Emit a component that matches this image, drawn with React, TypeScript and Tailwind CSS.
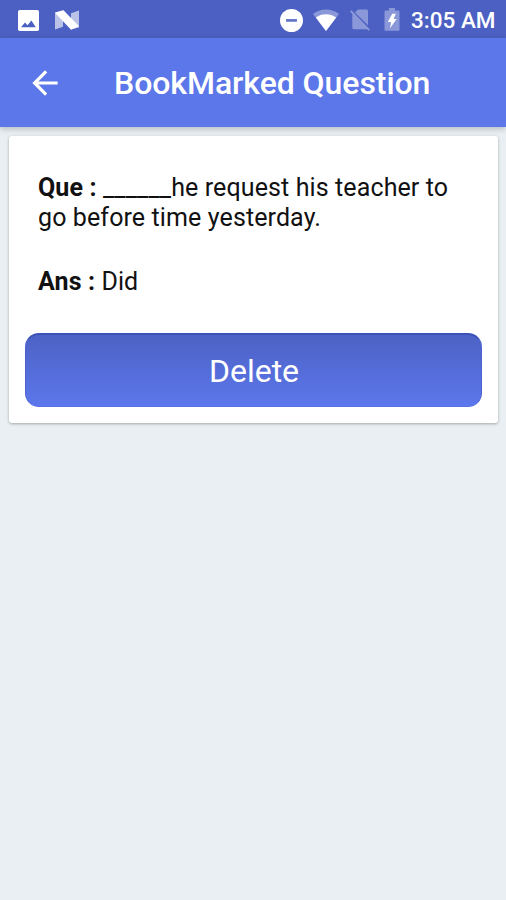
import type { ReactNode } from "react";

function StatusBar() {
  return (
    <div className="flex h-[38px] items-center bg-[#4c60c3] pr-3 pl-[18px] text-white">
      <svg viewBox="0 0 21 21" className="mt-[2px] h-[21px] w-[21px]" aria-hidden>
        <rect width="21" height="21" rx="1.8" fill="#fff" />
        <path d="M3 17.200 7 12.400l2.500 2.900 3.900-4.700 4.400 6.600z" fill="#4c60c3" />
      </svg>
      <svg viewBox="0 0 24 20" className="mt-[2px] ml-4 h-5 w-6" fill="currentColor" aria-hidden>
        <path d="M0 2.500 8 .2v16.500L0 19.500zM24 .5v17L16 19.500V3.300z" opacity=".62" />
        <path d="M0 2.800 8.500.2 24 16.200 16 19.800z" />
      </svg>

      <div className="ml-auto flex items-center">
        <svg viewBox="0 0 24 24" className="mt-[2px] h-[23px] w-[23px]" aria-hidden>
          <circle cx="12" cy="12" r="12" fill="#fff" />
          <rect x="6.300" y="10.500" width="11.400" height="2.800" fill="#6273c8" />
        </svg>
        <svg viewBox="0 0 26 22" className="mt-[1px] ml-[10px] h-[22px] w-[26px]" fill="currentColor" aria-hidden>
          <path d="M13 22 0 5C3.600 2 8 .4 13 .4S22.400 2 26 5z" opacity=".35" />
          <path d="M13 22 2.800 8.600C5.700 6.300 9.200 5.200 13 5.200s7.300 1.100 10.200 3.400z" />
        </svg>
        <svg viewBox="0 0 20 22" className="mt-[2px] ml-[11px] h-[22px] w-5 opacity-35" fill="currentColor" aria-hidden>
          <path d="M18 16.300V2.200C18 1.200 17.300.5 16.300.5H8L5 3.600zM1.400 1.200 0 2.500 2.300 4.900V18.500c0 1 .8 1.800 1.800 1.800h12.200l.8-.1 1.500 1.600L20 20.500z" />
        </svg>
        <svg viewBox="0 0 16 23" className="mt-[1px] ml-[14px] h-[23px] w-4" fill="currentColor" aria-hidden>
          <path d="M14.300 2.600H11V0H5v2.600H1.700C1 2.600.5 3.200.5 3.900v17.600c0 .8.5 1.300 1.200 1.300h12.600c.7 0 1.200-.5 1.200-1.300V3.900c0-.7-.5-1.300-1.200-1.300z" opacity=".35" />
          <path d="M6 20.300 7.100 14H3.800L8.200 5.800h3.600L9.600 10.900h3z" />
        </svg>
        <span className="mt-px ml-[11px] w-[83px] text-[22.500px] leading-7 font-medium whitespace-nowrap">
          3:05 AM
        </span>
      </div>
    </div>
  );
}

function AppBar({ title }: { title: string }) {
  return (
    <header className="relative flex h-[89px] items-center bg-[#5c77e9] pl-[26px] text-white shadow-[0_2px_6px_rgba(0,0,0,0.22)]">
      <button type="button" aria-label="Back" className="shrink-0">
        <svg viewBox="0 0 24 24" className="h-[38px] w-[38px]" fill="currentColor" aria-hidden>
          <path d="M20 11H7.830l5.590-5.590L12 4l-8 8 8 8 1.410-1.410L7.830 13H20v-2z" />
        </svg>
      </button>
      <h1 className="ml-[50px] text-[32px] leading-10 font-medium tracking-[-0.060px] whitespace-nowrap">
        {title}
      </h1>
    </header>
  );
}

function Entry({ label, children }: { label: string; children: ReactNode }) {
  return (
    <p className="px-[13px] text-[25px] leading-[29.500px] tracking-[0.110px] text-[#111]">
      <b className="font-bold">{label} :</b> {children}
    </p>
  );
}

export default function App() {
  return (
    <div className="min-h-[900px] w-full bg-[#e9eff2] font-['Roboto',sans-serif]">
      <StatusBar />
      <AppBar title="BookMarked Question" />

      <main className="pt-[9px] pr-2 pl-[9px]">
        <article className="flex h-[287px] flex-col rounded-[3px] bg-white px-4 pt-[37px] shadow-[0_1px_3px_rgba(0,0,0,0.3)]">
          <Entry label="Que">
            ______he request his teacher to
            <br />
            go before time yesterday.
          </Entry>
          <div className="mt-[35px]">
            <Entry label="Ans">Did</Entry>
          </div>
          <button
            type="button"
            className="mt-auto mb-4 h-[74px] w-full rounded-[14px] border border-t-2 border-[#4c64d0] border-t-[#3a51b8] border-b-[#5571e6] bg-linear-to-b from-[#4d62c5] to-[#5c77ec] pl-px text-[32px] text-white"
          >
            Delete
          </button>
        </article>
      </main>
    </div>
  );
}
